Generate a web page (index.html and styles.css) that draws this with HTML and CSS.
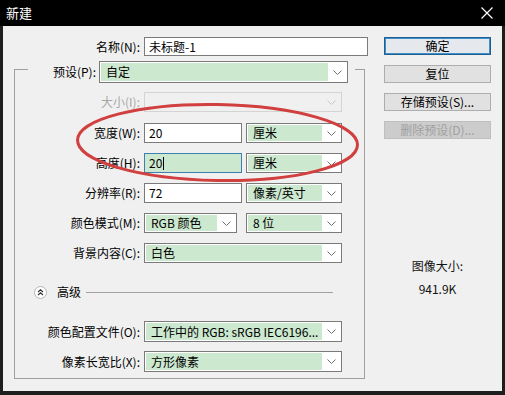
FILE: index.html
```html
<!DOCTYPE html>
<html lang="zh">
<head>
<meta charset="utf-8">
<title>新建</title>
<link rel="stylesheet" href="styles.css">
</head>
<body>
<div class="window">
  <div class="titlebar">
    <span class="title">新建</span>
    <svg class="close" width="12" height="12" viewBox="0 0 12 12"><path d="M0.5 0.5 L11.5 11.5 M11.5 0.5 L0.5 11.5" stroke="#fff" stroke-width="1.2" fill="none"/></svg>
  </div>
  <div class="client">
    <div class="left">
      <div class="row row-name">
        <label>名称(N):</label>
        <div class="input w224">未标题-1</div>
      </div>
      <div class="group">
        <div class="preset">
          <label>预设(P):</label>
          <div class="select w249 h22"><span class="val">自定</span><span class="arrow"><svg width="9" height="5" viewBox="0 0 9 5"><path d="M0.5 0.5 L4.5 4.5 L8.5 0.5" fill="none" stroke="#707070"/></svg></span></div>
        </div>
        <div class="row r-size">
          <label class="disabled">大小(I):</label>
          <div class="select w198 dis"><span class="val"></span><span class="arrow"><svg width="9" height="5" viewBox="0 0 9 5"><path d="M0.5 0.5 L4.5 4.5 L8.5 0.5" fill="none" stroke="#c8c8c8"/></svg></span></div>
        </div>
        <div class="row r-gap">
          <label>宽度(W):</label>
          <div class="pair">
            <div class="input w98">20</div>
            <div class="select w96"><span class="val">厘米</span><span class="arrow"><svg width="9" height="5" viewBox="0 0 9 5"><path d="M0.5 0.5 L4.5 4.5 L8.5 0.5" fill="none" stroke="#707070"/></svg></span></div>
          </div>
        </div>
        <div class="row r-gap2">
          <label>高度(H):</label>
          <div class="pair">
            <div class="input w98 focus">20<span class="caret"></span></div>
            <div class="select w96"><span class="val">厘米</span><span class="arrow"><svg width="9" height="5" viewBox="0 0 9 5"><path d="M0.5 0.5 L4.5 4.5 L8.5 0.5" fill="none" stroke="#707070"/></svg></span></div>
          </div>
        </div>
        <div class="row r-gap2">
          <label>分辨率(R):</label>
          <div class="pair">
            <div class="input w98">72</div>
            <div class="select w96"><span class="val">像素/英寸</span><span class="arrow"><svg width="9" height="5" viewBox="0 0 9 5"><path d="M0.5 0.5 L4.5 4.5 L8.5 0.5" fill="none" stroke="#707070"/></svg></span></div>
          </div>
        </div>
        <div class="row r-gap2">
          <label>颜色模式(M):</label>
          <div class="pair pair-wide">
            <div class="select w93"><span class="val">RGB 颜色</span><span class="arrow"><svg width="9" height="5" viewBox="0 0 9 5"><path d="M0.5 0.5 L4.5 4.5 L8.5 0.5" fill="none" stroke="#707070"/></svg></span></div>
            <div class="select w96"><span class="val">8 位</span><span class="arrow"><svg width="9" height="5" viewBox="0 0 9 5"><path d="M0.5 0.5 L4.5 4.5 L8.5 0.5" fill="none" stroke="#707070"/></svg></span></div>
          </div>
        </div>
        <div class="row r-gap2">
          <label>背景内容(C):</label>
          <div class="select w198"><span class="val">白色</span><span class="arrow"><svg width="9" height="5" viewBox="0 0 9 5"><path d="M0.5 0.5 L4.5 4.5 L8.5 0.5" fill="none" stroke="#707070"/></svg></span></div>
        </div>
        <div class="adv">
          <svg class="adv-icon" width="13" height="13" viewBox="0 0 13 13"><circle cx="6.5" cy="6.5" r="6" fill="#fff" stroke="#b4b4b4"/><path d="M4 6 L6.5 3.8 L9 6 M4 9 L6.5 6.8 L9 9" fill="none" stroke="#303030" stroke-width="1.1"/></svg>
          <span class="adv-text">高级</span>
          <span class="adv-line"></span>
        </div>
        <div class="row r-prof">
          <label>颜色配置文件(O):</label>
          <div class="select w198 h21"><span class="val">工作中的 RGB: sRGB IEC6196...</span><span class="arrow"><svg width="9" height="5" viewBox="0 0 9 5"><path d="M0.5 0.5 L4.5 4.5 L8.5 0.5" fill="none" stroke="#707070"/></svg></span></div>
        </div>
        <div class="row r-aspect">
          <label>像素长宽比(X):</label>
          <div class="select w198 h21"><span class="val">方形像素</span><span class="arrow"><svg width="9" height="5" viewBox="0 0 9 5"><path d="M0.5 0.5 L4.5 4.5 L8.5 0.5" fill="none" stroke="#707070"/></svg></span></div>
        </div>
      </div>
    </div>
    <div class="right">
      <div class="btn btn-default">确定</div>
      <div class="btn">复位</div>
      <div class="btn">存储预设(S)...</div>
      <div class="btn btn-disabled">删除预设(D)...</div>
      <div class="info">图像大小:<br>941.9K</div>
    </div>
  </div>
  <svg class="annot" width="505" height="395" viewBox="0 0 505 395"><ellipse cx="217.5" cy="142.5" rx="140" ry="38" transform="rotate(1 217.5 142.5)" fill="none" stroke="#d13f3f" stroke-width="3"/></svg>
</div>
</body>
</html>
```

FILE: styles.css
```css
* { box-sizing: border-box; }
body { margin: 0; background: #000; }
.window {
  position: relative;
  width: 505px;
  height: 395px;
  background: #1e1e1e;
  font-family: "Noto Sans CJK SC", "Microsoft YaHei", sans-serif;
  font-size: 12px;
  color: #000;
  display: flex;
  flex-direction: column;
}
.titlebar {
  height: 26px;
  background: #000;
  color: #fff;
  display: flex;
  align-items: center;
  justify-content: space-between;
  padding: 0 12px 0 6px;
  font-size: 13px;
}
.title { line-height: 16px; }
.client {
  height: 365px;
  margin: 0 3px;
  background: #f0f0f0;
  display: flex;
  padding-top: 11px;
}
.left { width: 366px; }
.right {
  width: 107px;
  margin-left: 15px;
  display: flex;
  flex-direction: column;
}
.row {
  display: grid;
  grid-template-columns: 125px max-content;
  column-gap: 4px;
  align-items: center;
}
.row-name { grid-template-columns: 137px max-content; height: 19px; }
label { text-align: right; line-height: 16px; white-space: nowrap; }
label.disabled { color: #a8a8a8; }
.group {
  margin: 13px 0 0 11px;
  width: 351px;
  height: 310px;
  border: 1px solid #a0a0a0;
}
.preset {
  margin: -9px 0 0 13px;
  width: 327px;
  height: 22px;
  background: #f0f0f0;
  display: flex;
  align-items: center;
  column-gap: 3px;
}
.preset label { width: 68px; }
.r-size { margin-top: 9px; }
.r-gap { margin-top: 11px; }
.r-gap2 { margin-top: 10px; }
.r-prof { margin-top: 22px; }
.r-aspect { margin-top: 9px; }
.pair { display: flex; column-gap: 4px; }
.pair-wide { column-gap: 9px; }
.input {
  height: 20px;
  border: 1px solid #7a7a7a;
  background: #fff;
  padding-left: 4px;
  line-height: 18px;
  display: flex;
  align-items: center;
  white-space: nowrap;
}
.row-name .input { height: 19px; line-height: 17px; }
.input.focus { border-color: #3c7fb1; background: #cce8cf; }
.caret { display: inline-block; width: 1px; height: 13px; background: #000; margin-left: 1px; }
.select {
  height: 20px;
  border: 1px solid #7a7a7a;
  background: #fff;
  padding: 1px;
  display: flex;
}
.select .val {
  flex: 1;
  background: #cce8cf;
  padding-left: 5px;
  line-height: 16px;
  white-space: nowrap;
  overflow: hidden;
}
.select .arrow {
  width: 18px;
  display: flex;
  align-items: center;
  justify-content: center;
}
.select.dis { border-color: #d4d4d4; background: #f0f0f0; }
.select.dis .val { background: #f0f0f0; }
.h22 { height: 22px; }
.h22 .val { line-height: 18px; }
.h21 { height: 21px; }
.h21 .val { line-height: 17px; }
.w224 { width: 224px; }
.w249 { width: 249px; }
.w198 { width: 198px; }
.w98 { width: 98px; }
.w96 { width: 96px; }
.w93 { width: 93px; }
.adv {
  display: flex;
  align-items: center;
  height: 14px;
  margin: 22px 0 0 19px;
}
.adv-icon { flex: none; }
.adv-text { margin-left: 10px; line-height: 14px; font-size: 12px; }
.adv-line {
  margin-left: 5px;
  width: 247px;
  height: 1px;
  background: #a0a0a0;
}
.btn {
  height: 18px;
  margin-bottom: 10px;
  border: 1px solid #adadad;
  background: #e1e1e1;
  text-align: center;
  line-height: 16px;
  white-space: nowrap;
}
.btn-default {
  border-color: #1f5f8e;
  box-shadow: inset 0 0 0 1px #3e8fcc;
  background: #e5e9ed;
}
.btn-disabled { background: #cccccc; border-color: #bfbfbf; color: #a0a0a0; }
.info {
  margin-top: 105px;
  text-align: center;
  line-height: 23px;
  color: #111;
}
.annot { position: absolute; left: 0; top: 0; pointer-events: none; }
```
